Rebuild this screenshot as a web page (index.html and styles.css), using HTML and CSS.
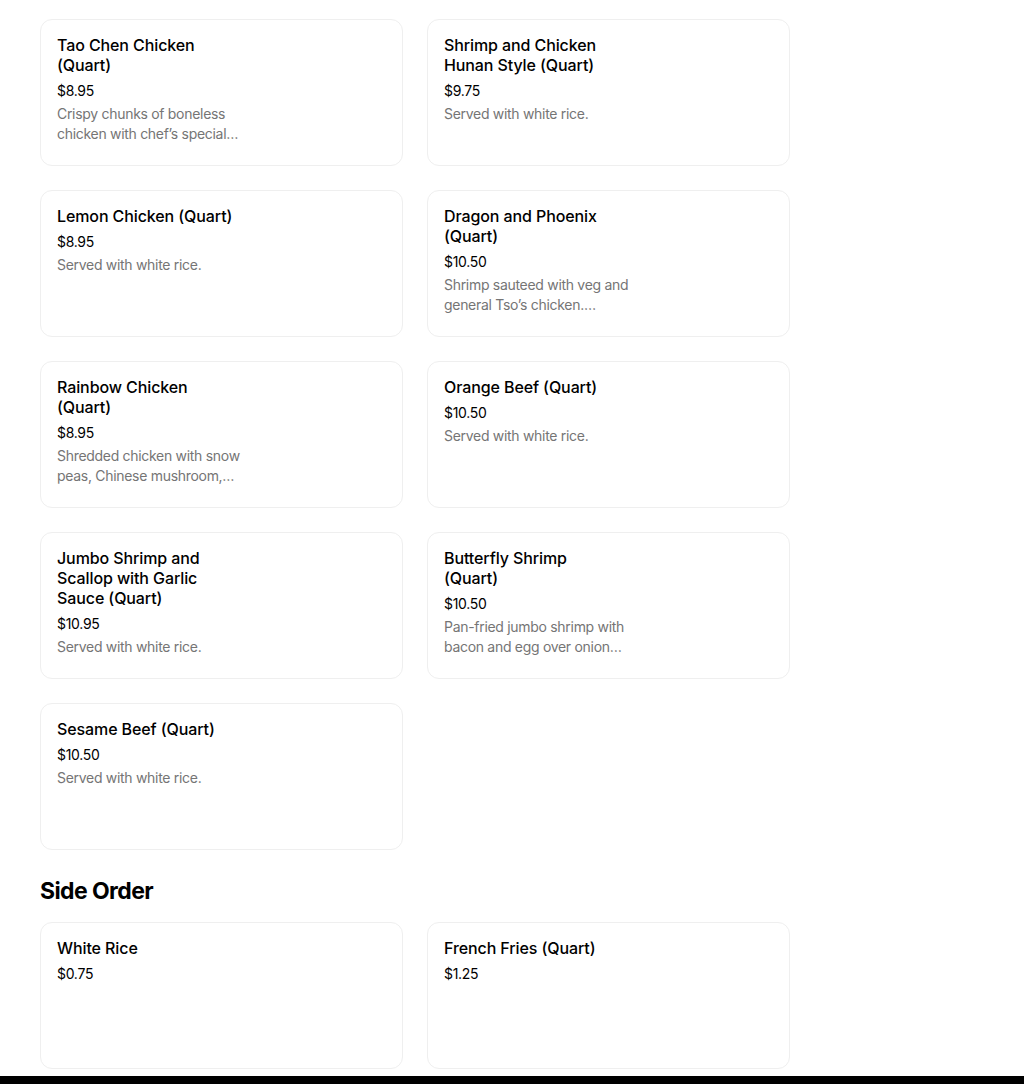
FILE: index.html
```html
<!DOCTYPE html>
<html>
<head>
<meta charset="utf-8">
<link rel="stylesheet" href="styles.css">
</head>
<body>
<main class="page">
  <section class="grid">
    <div class="card"><div class="info"><div class="title">Tao Chen Chicken (Quart)</div><div class="price">$8.95</div><div class="desc">Crispy chunks of boneless chicken with chef’s special sauce.</div></div></div>
    <div class="card"><div class="info"><div class="title">Shrimp and Chicken Hunan Style (Quart)</div><div class="price">$9.75</div><div class="desc">Served with white rice.</div></div></div>
    <div class="card"><div class="info"><div class="title">Lemon Chicken (Quart)</div><div class="price">$8.95</div><div class="desc">Served with white rice.</div></div></div>
    <div class="card"><div class="info"><div class="title">Dragon and Phoenix (Quart)</div><div class="price">$10.50</div><div class="desc">Shrimp sauteed with veg and general Tso’s chicken.…</div></div></div>
    <div class="card"><div class="info"><div class="title">Rainbow Chicken (Quart)</div><div class="price">$8.95</div><div class="desc">Shredded chicken with snow peas, Chinese mushroom, bamboo shoots and carrots.</div></div></div>
    <div class="card"><div class="info"><div class="title">Orange Beef (Quart)</div><div class="price">$10.50</div><div class="desc">Served with white rice.</div></div></div>
    <div class="card"><div class="info"><div class="title">Jumbo Shrimp and Scallop with Garlic Sauce (Quart)</div><div class="price">$10.95</div><div class="desc">Served with white rice.</div></div></div>
    <div class="card"><div class="info"><div class="title">Butterfly Shrimp (Quart)</div><div class="price">$10.50</div><div class="desc">Pan-fried jumbo shrimp with bacon and egg over onion sauce.</div></div></div>
    <div class="card"><div class="info"><div class="title">Sesame Beef (Quart)</div><div class="price">$10.50</div><div class="desc">Served with white rice.</div></div></div>
  </section>
  <h2 class="section-title">Side Order</h2>
  <section class="grid">
    <div class="card"><div class="info"><div class="title">White Rice</div><div class="price">$0.75</div></div></div>
    <div class="card"><div class="info"><div class="title">French Fries (Quart)</div><div class="price">$1.25</div></div></div>
  </section>
</main>
<footer class="footer"></footer>
</body>
</html>
```
FILE: styles.css
```css
* { box-sizing: border-box; }
html, body { margin: 0; padding: 0; background: #fff; }
body {
  font-family: Inter, "Noto Sans", Roboto, sans-serif;
  color: #000;
}
.page {
  padding: 19px 40px 7px 40px;
}
.grid {
  display: grid;
  grid-template-columns: 363px 363px;
  column-gap: 24px;
  row-gap: 24px;
}
.card {
  height: 147px;
  border: 1px solid #efefef;
  border-radius: 12px;
  padding: 15px 16px;
}
.info {
  width: 190px;
  display: flex;
  flex-direction: column;
}
.title {
  max-width: 178px;
  font-size: 16px;
  line-height: 20px;
  font-weight: 500;
  color: #000;
  letter-spacing: -0.1px;
  margin-bottom: 6px;
}
.price {
  font-size: 14px;
  line-height: 20px;
  color: #000;
  letter-spacing: -0.3px;
  margin-bottom: 3px;
}
.desc {
  font-size: 14px;
  line-height: 20px;
  color: #757575;
  display: -webkit-box;
  -webkit-line-clamp: 2;
  -webkit-box-orient: vertical;
  overflow: hidden;
  letter-spacing: -0.3px;
}
.section-title {
  margin: 25px 0 15px 0;
  font-size: 23px;
  line-height: 32px;
  font-weight: 700;
  letter-spacing: -0.6px;
}
.footer {
  height: 8px;
  background: #000;
}
```
